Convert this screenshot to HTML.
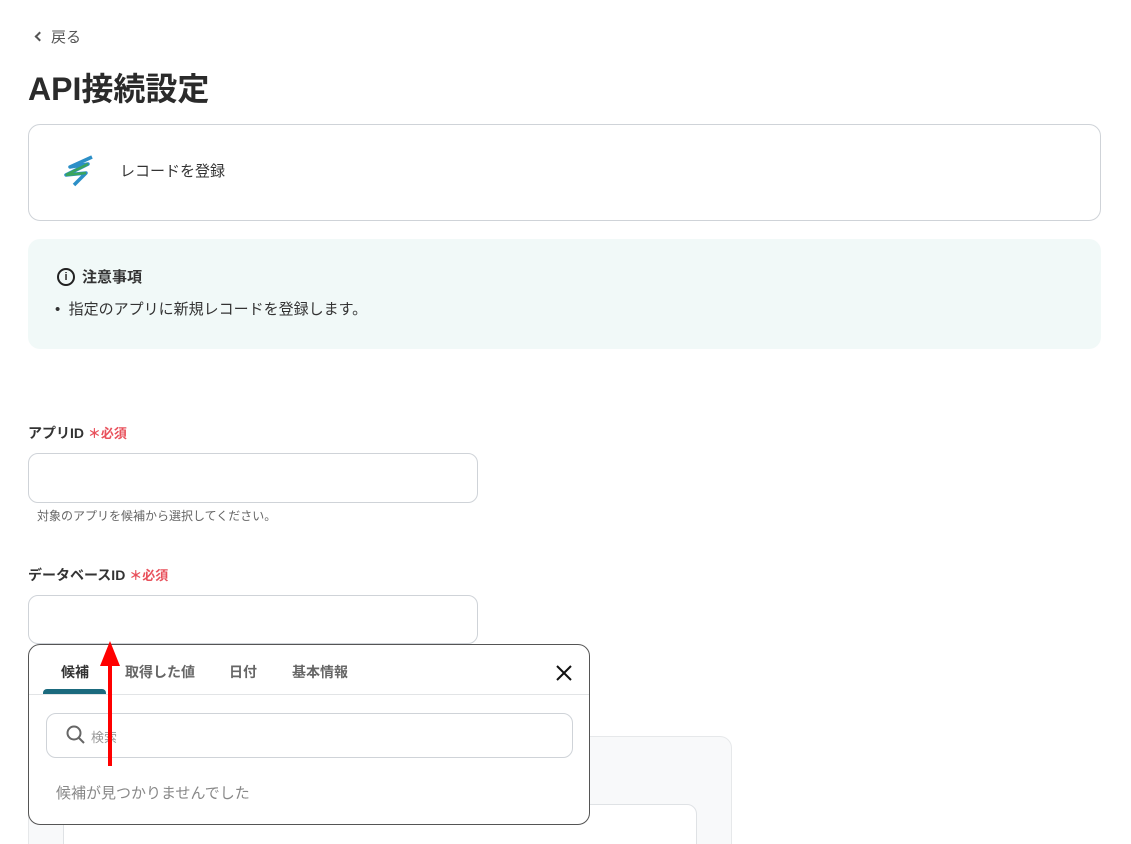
<!DOCTYPE html>
<html><head><meta charset="utf-8"><style>
*{box-sizing:border-box;margin:0;padding:0}
html{height:844px;overflow:hidden}
body{width:1131px;height:844px;overflow:hidden;background:#fff;font-family:"Liberation Sans","Noto Sans CJK JP",sans-serif;color:#2b2b2b;position:relative}
.abs{position:absolute}
.lbl{font-size:14px;font-weight:bold;color:#333}
.req{color:#e8505b;font-size:13px;font-weight:bold}
.inp{border:1px solid #cfd3d8;border-radius:10px;background:#fff}
</style></head><body>
<div class="abs" style="left:36px;top:26px;font-size:15px;color:#555"><span style="display:inline-block;width:7px;height:7px;border-left:2px solid #555;border-bottom:2px solid #555;transform:rotate(45deg);margin-right:8px;margin-bottom:2px"></span>戻る</div>
<div class="abs" style="left:28px;top:64px;font-size:32px;font-weight:bold;color:#2b2b2b">API接続設定</div>
<div class="abs" style="left:28px;top:124px;width:1073px;height:97px;border:1px solid #cfd3d8;border-radius:12px"></div>
<svg class="abs" style="left:62px;top:155px" width="34" height="34" viewBox="0 0 34 34"><path d="M30 2 L8 12 L26 9 L4 20 L24 18 L12 30" fill="none" stroke="#2c8fc7" stroke-width="3.5" stroke-linejoin="round"/><path d="M26 9 L4 20 L24 18" fill="none" stroke="#3aa45c" stroke-width="2.5"/></svg>
<div class="abs" style="left:120px;top:160px;font-size:15px;color:#333">レコードを登録</div>
<div class="abs" style="left:28px;top:239px;width:1073px;height:110px;background:#f1f9f8;border-radius:12px"></div>
<div class="abs" style="left:57px;top:268px;width:18px;height:18px;border:2px solid #222;border-radius:50%;font-size:11px;font-weight:bold;text-align:center;line-height:14px">i</div>
<div class="abs" style="left:82px;top:266px;font-size:15px;font-weight:bold;color:#333">注意事項</div>
<div class="abs" style="left:55px;top:298px;font-size:15px;color:#333">•&nbsp; 指定のアプリに新規レコードを登録します。</div>
<div class="abs lbl" style="left:28px;top:423px">アプリID <span class="req">＊必須</span></div>
<div class="abs inp" style="left:28px;top:453px;width:450px;height:50px"></div>
<div class="abs" style="left:37px;top:507px;font-size:12px;color:#666">対象のアプリを候補から選択してください。</div>
<div class="abs lbl" style="left:28px;top:565px">データベースID <span class="req">＊必須</span></div>
<div class="abs inp" style="left:28px;top:595px;width:450px;height:49px"></div>
<div class="abs" style="left:28px;top:736px;width:704px;height:120px;background:#f8f9fa;border:1px solid #e6e8ea;border-radius:12px"></div>
<div class="abs" style="left:63px;top:804px;width:634px;height:60px;background:#fff;border:1px solid #dfe2e5;border-radius:10px"></div>
<div class="abs" style="left:28px;top:644px;width:562px;height:181px;background:#fff;border:1px solid #555;border-radius:12px">
 <div class="abs" style="left:0;top:49px;width:560px;height:1px;background:#e2e4e6"></div>
 <div class="abs" style="left:14px;top:44px;width:63px;height:5px;background:#1b6a7e;border-radius:4px 4px 0 0"></div>
 <div class="abs" style="left:32px;top:17px;font-size:14px;font-weight:bold;color:#333">候補</div>
 <div class="abs" style="left:96px;top:17px;font-size:14px;font-weight:bold;color:#666">取得した値</div>
 <div class="abs" style="left:200px;top:17px;font-size:14px;font-weight:bold;color:#666">日付</div>
 <div class="abs" style="left:263px;top:17px;font-size:14px;font-weight:bold;color:#666">基本情報</div>
 <svg class="abs" style="left:526px;top:19px" width="18" height="18"><path d="M2 2L16 16M16 2L2 16" stroke="#111" stroke-width="2"/></svg>
 <div class="abs inp" style="left:17px;top:68px;width:527px;height:45px"></div>
 <svg class="abs" style="left:37px;top:80px" width="20" height="20"><circle cx="8" cy="8" r="6.5" fill="none" stroke="#666" stroke-width="2"/><path d="M13 13L18 18" stroke="#666" stroke-width="2"/></svg>
 <div class="abs" style="left:62px;top:82px;font-size:13px;color:#999">検索</div>
 <div class="abs" style="left:27px;top:137px;font-size:15px;color:#888">候補が見つかりませんでした</div>
</div>
<div class="abs" style="left:108px;top:660px;width:4px;height:106px;background:#f00"></div>
<div class="abs" style="left:100px;top:641px;width:0;height:0;border-left:10px solid transparent;border-right:10px solid transparent;border-bottom:25px solid #f00"></div>
</body></html>
